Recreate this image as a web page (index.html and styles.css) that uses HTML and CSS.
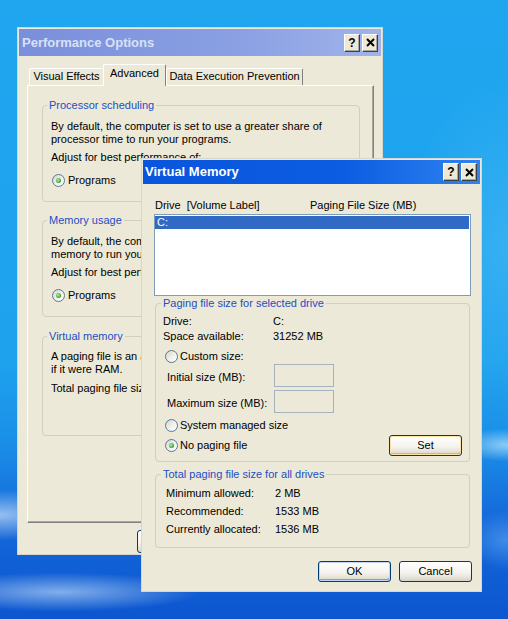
FILE: index.html
```html
<!DOCTYPE html>
<html lang="en">
<head>
<meta charset="utf-8">
<title>Performance Options</title>
<link rel="stylesheet" href="styles.css">
</head>
<body>
<div class="desktop">

  <section class="window perf">
    <header class="titlebar inactive">
      <span class="title">Performance Options</span>
      <div class="tbtns">
        <span class="tbtn">?</span>
        <span class="tbtn"><svg width="9" height="9" viewBox="0 0 9 9"><path d="M1 1L8 8M8 1L1 8" stroke="#000" stroke-width="2"/></svg></span>
      </div>
    </header>
    <div class="tabs">
      <span class="tab t-ve">Visual Effects</span>
      <span class="tab t-adv selected">Advanced</span>
      <span class="tab t-dep">Data Execution Prevention</span>
    </div>
    <div class="panel">
      <fieldset class="group g-first">
        <legend>Processor scheduling</legend>
        <p class="desc">By default, the computer is set to use a greater share of<br>processor time to run your programs.</p>
        <p class="adjust">Adjust for best performance of:</p>
        <div class="radios">
          <span class="opt"><span class="radio on"></span>Programs</span>
        </div>
      </fieldset>
      <fieldset class="group g-mem">
        <legend>Memory usage</legend>
        <p class="desc">By default, the computer is set to use a greater share of<br>memory to run your programs.</p>
        <p class="adjust">Adjust for best performance of:</p>
        <div class="radios">
          <span class="opt"><span class="radio on"></span>Programs</span>
        </div>
      </fieldset>
      <fieldset class="group g-vm">
        <legend>Virtual memory</legend>
        <p class="desc">A paging file is an area on the hard disk that Windows uses as<br>if it were RAM.</p>
        <p class="total">Total paging file size for all drives:&nbsp;&nbsp;&nbsp;&nbsp;1536 MB</p>
        <div class="change-row"><span class="btn">Change</span></div>
      </fieldset>
    </div>
    <div class="dlg-buttons perf-buttons">
      <span class="btn">OK</span>
      <span class="btn">Cancel</span>
      <span class="btn">Apply</span>
    </div>
  </section>

  <section class="window vm">
    <header class="titlebar active">
      <span class="title">Virtual Memory</span>
      <div class="tbtns">
        <span class="tbtn">?</span>
        <span class="tbtn"><svg width="9" height="9" viewBox="0 0 9 9"><path d="M1 1L8 8M8 1L1 8" stroke="#000" stroke-width="2"/></svg></span>
      </div>
    </header>
    <div class="vm-body">
      <div class="cols">
        <span class="col-drive">Drive&nbsp;&nbsp;[Volume Label]</span>
        <span>Paging File Size (MB)</span>
      </div>
      <div class="listbox">
        <div class="sel">C:</div>
      </div>

      <fieldset class="vgroup g-sel">
        <legend>Paging file size for selected drive</legend>
        <div class="kv r-drive"><span class="k">Drive:</span><span>C:</span></div>
        <div class="kv r-space"><span class="k">Space available:</span><span>31252 MB</span></div>
        <div class="opt r-custom"><span class="radio"></span>Custom size:</div>
        <div class="inrow r-init"><span class="k">Initial size (MB):</span><span class="field"></span></div>
        <div class="inrow r-max"><span class="k">Maximum size (MB):</span><span class="field"></span></div>
        <div class="opt r-system"><span class="radio"></span>System managed size</div>
        <div class="r-none">
          <span class="opt"><span class="radio on"></span>No paging file</span>
          <span class="btn btn-set">Set</span>
        </div>
      </fieldset>

      <fieldset class="vgroup g-total">
        <legend>Total paging file size for all drives</legend>
        <div class="kv2"><span class="k">Minimum allowed:</span><span>2 MB</span></div>
        <div class="kv2"><span class="k">Recommended:</span><span>1533 MB</span></div>
        <div class="kv2"><span class="k">Currently allocated:</span><span>1536 MB</span></div>
      </fieldset>

      <div class="dlg-buttons vm-buttons">
        <span class="btn btn-default">OK</span>
        <span class="btn">Cancel</span>
      </div>
    </div>
  </section>

</div>
</body>
</html>
```

FILE: styles.css
```css
* { box-sizing: border-box; }

html, body { margin: 0; padding: 0; }

body {
  width: 508px;
  height: 619px;
  overflow: hidden;
  font: 11px/13px "Liberation Sans", Arial, sans-serif;
  color: #000;
}

/* desktop wallpaper: sky blue with soft light streaks toward the bottom */
.desktop {
  position: relative;
  width: 508px;
  height: 619px;
  overflow: hidden;
  background:
    radial-gradient(ellipse 190px 26px at 60px 592px, rgba(225, 242, 255, .55), transparent 75%),
    radial-gradient(ellipse 120px 34px at 0px 515px, rgba(235, 247, 255, .6), transparent 75%),
    radial-gradient(ellipse 70px 22px at 508px 445px, rgba(190, 232, 255, .7), transparent 75%),
    radial-gradient(ellipse 60px 40px at 508px 540px, rgba(120, 190, 250, .45), transparent 75%),
    radial-gradient(ellipse 150px 240px at 100% 40%, rgba(110, 205, 250, .3), transparent 70%),
    linear-gradient(180deg, #1fa6ef 0%, #1ea2ee 58%, #1a8ee7 72%, #1468da 84%, #0c56cf 100%);
}

/* windows */
.window {
  position: absolute;
  display: flex;
  flex-direction: column;
  background: #ece9d8;
  border: 1px solid #d8d5ca;
  padding: 1px;
}

.perf { left: 17px; top: 27px; width: 366px; height: 528px; }
.vm { left: 141px; top: 158px; width: 341px; height: 434px; }

.titlebar {
  flex: none;
  display: flex;
  align-items: center;
  justify-content: space-between;
  padding: 0 3px;
}

.title { font: bold 13px/16px "Liberation Sans", Arial, sans-serif; }

.titlebar.inactive {
  height: 27px;
  background: linear-gradient(90deg, #7a8fdb, #8aa0e3 60%, #a0b3ea);
}
.titlebar.inactive .title { color: #d7e1f6; }

.titlebar.active {
  height: 24px;
  padding-left: 2px;
  background: linear-gradient(90deg, #0a55dc, #0c5de2 60%, #2f83ef);
}
.titlebar.active .title { color: #fff; }

.tbtns { display: flex; gap: 2px; }

.tbtn {
  width: 16px;
  height: 18px;
  display: flex;
  align-items: center;
  justify-content: center;
  background: #ece9d8;
  border: 1px solid;
  border-color: #fff #404040 #404040 #fff;
  box-shadow: inset -1px -1px 0 #aca899;
  font: bold 12px/1 "Liberation Sans", Arial, sans-serif;
  color: #000;
}

/* tab strip */
.tabs {
  flex: none;
  display: flex;
  align-items: flex-end;
  height: 29px;
  padding-left: 10px;
}

.tab {
  height: 17px;
  line-height: 15px;
  text-align: center;
  white-space: nowrap;
  background: #ece9d8;
  border: 1px solid;
  border-color: #fff #808080 transparent #fff;
  border-bottom: 0;
  border-radius: 2px 2px 0 0;
}

.t-ve { width: 74px; border-right: 0; }
.t-adv { width: 63px; }
.t-dep { width: 137px; border-left-color: #fff; }

.tab.selected {
  position: relative;
  z-index: 1;
  height: 22px;
  margin-bottom: -1px;
  line-height: 17px;
}

.panel {
  flex: none;
  margin-left: 8px;
  width: 347px;
  height: 438px;
  border: 1px solid;
  border-color: #fff #808080 #808080 #fff;
  box-shadow: inset -1px -1px 0 #aca899;
  padding: 13px 13px 0 14px;
}

/* group boxes */
.group, .vgroup {
  margin: 0;
  min-width: 0;
  border: 1px solid #d0d0bf;
  border-radius: 4px;
}

.group { padding: 0 8px 14px; }
.group legend {
  padding: 0 2px;
  margin-left: -4px;
  line-height: 13px;
  color: #1c4ec4;
}

.g-mem { margin-top: 12px; }
.g-vm { margin-top: 13px; padding-bottom: 10px; }

.group p { margin: 0; white-space: nowrap; }
.group .desc { margin-top: 8px; }
.group .adjust { margin-top: 5px; }
.g-vm .desc { margin-top: 7px; }
.g-vm .total { margin-top: 6px; }

.change-row {
  display: flex;
  justify-content: flex-end;
  margin-top: 7px;
}
.change-row .btn { width: 75px; height: 23px; }

.radios {
  display: flex;
  margin-top: 10px;
  height: 13px;
}

.opt {
  display: flex;
  align-items: center;
  height: 13px;
  white-space: nowrap;
}

.radios .radio { margin-left: 1px; margin-right: 3px; }

/* radio buttons */
.radio {
  position: relative;
  flex: none;
  width: 13px;
  height: 13px;
  border-radius: 50%;
  border: 1px solid #5b7896;
  background: linear-gradient(135deg, #d6d3c8 0%, #f2f1ec 55%, #fff 100%);
}

.radio.on::after {
  content: "";
  position: absolute;
  left: 3px;
  top: 3px;
  width: 5px;
  height: 5px;
  border-radius: 50%;
  background: radial-gradient(circle at 40% 40%, #b8ecb8, #2aa52a 70%);
}

/* buttons */
.btn {
  display: flex;
  align-items: center;
  justify-content: center;
  border: 1px solid #003c74;
  border-radius: 3px;
  background: linear-gradient(180deg, #fff 0%, #f4f3ee 55%, #e3e0d5 85%, #d6d0c5 100%);
  color: #000;
}

.dlg-buttons { display: flex; justify-content: flex-end; flex: none; }

.perf-buttons {
  gap: 6px;
  margin-top: 7px;
  padding-right: 7px;
}
.perf-buttons .btn { width: 75px; height: 23px; }

/* virtual memory dialog body */
.vm-body {
  flex: 1;
  display: flex;
  flex-direction: column;
  padding: 0 9px 0 11px;
}

.cols {
  display: flex;
  height: 13px;
  margin-top: 15px;
  padding-left: 1px;
  white-space: nowrap;
}
.col-drive { width: 155px; }

.listbox {
  height: 82px;
  margin-top: 2px;
  border: 1px solid #7f9db9;
  background: #fff;
  padding: 1px 1px 0 0;
}

.sel {
  height: 13px;
  padding-left: 2px;
  background: #316ac5;
  color: #fff;
}

.vgroup {
  margin: 0 1px;
  padding: 0 7px 5px;
}
.vgroup legend {
  padding: 0 2px;
  margin-left: -2px;
  line-height: 13px;
  color: #1c4ec4;
}

.g-sel { margin-top: 1px; }

.kv { display: flex; height: 13px; }
.kv .k { width: 110px; }
.r-drive { margin-top: 5px; }
.r-space { margin-top: 2px; }

.r-custom { margin-top: 7px; }
.r-custom .radio,
.r-system .radio,
.r-none .radio { margin-left: 2px; margin-right: 2px; }

.inrow {
  display: flex;
  align-items: center;
  height: 23px;
}
.inrow .k { width: 111px; padding-left: 4px; padding-top: 3px; }
.r-init { margin-top: 1px; }
.r-max { margin-top: 3px; }

.field {
  width: 60px;
  height: 23px;
  border: 1px solid #a5b3bf;
  background: #ece9d8;
}

.r-system { margin-top: 6px; }

.r-none {
  display: flex;
  align-items: center;
  justify-content: space-between;
  height: 21px;
  margin-top: 3px;
}

.btn-set {
  width: 73px;
  height: 21px;
  box-shadow: inset 0 0 0 1px #fce3a4, inset -1px -2px 0 #f0b043;
}

.g-total { margin-top: 6px; padding-bottom: 11px; }

.kv2 {
  display: flex;
  height: 13px;
  margin-top: 5px;
  padding-left: 3px;
}
.kv2:first-of-type { margin-top: 6px; }
.kv2 .k { width: 109px; }

.vm-buttons {
  gap: 8px;
  margin-top: 13px;
  margin-right: -1px;
}
.vm-buttons .btn { width: 73px; height: 21px; }

.btn-default {
  box-shadow: inset 0 0 0 1px #c3d6f5, inset -1px -2px 0 #7d9ee4;
}
```
